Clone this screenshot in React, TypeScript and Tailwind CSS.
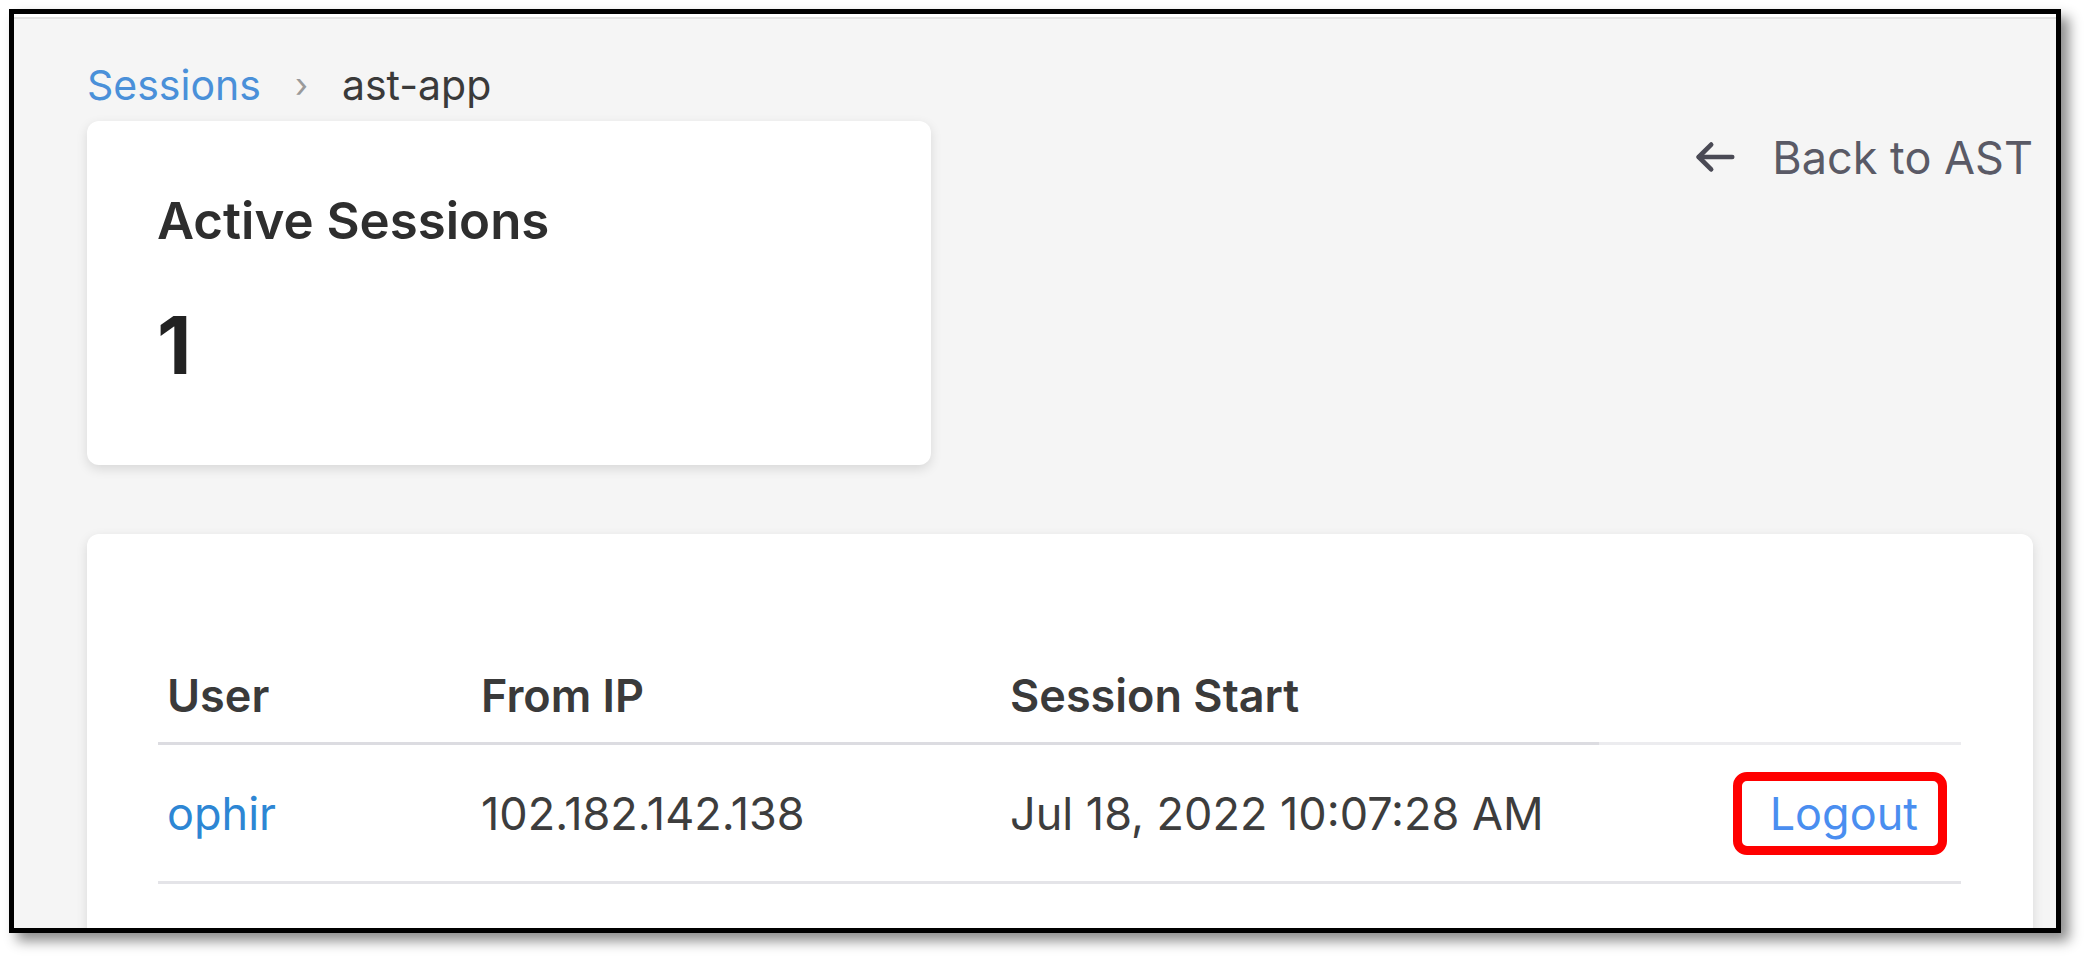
import React from "react";

export default function App() {
  return (
    <div
      className="w-[2089px] h-[962px] bg-white overflow-hidden pt-[9px] pl-[9px]"
      style={{ fontFamily: "Inter, 'Noto Sans', sans-serif" }}
    >
      <div className="w-[2052px] h-[924px] border-[5px] border-black bg-[#f5f5f5] overflow-hidden shadow-[8px_8px_12px_rgba(0,0,0,0.45)]">
        <div className="h-[3px] bg-white" />
        <div className="h-[2px] bg-[#e2e2e2]" />
        <div className="pl-[73px] pr-[23px]">
          {/* Breadcrumb */}
          <div className="mt-[42px] h-[48px] flex items-center text-[41px] leading-none">
            <span className="text-[#4a90d9]">Sessions</span>
            <span className="text-[#9a9a9a] mx-[34px] text-[34px]">›</span>
            <span className="text-[#3a3a3a]">ast-app</span>
          </div>

          {/* Top row */}
          <div className="mt-[12px] flex justify-between items-start">
            <div className="w-[844px] h-[344px] bg-white rounded-[12px] shadow-[0_4px_12px_rgba(0,0,0,0.12)] pl-[70px] pt-[69px]">
              <div className="h-[60px] flex items-center text-[51px] font-semibold text-[#2e2e2e] leading-none">
                Active Sessions
              </div>
              <div className="mt-[50px] h-[90px] flex items-center text-[80px] font-bold text-[#222] leading-none">
                1
              </div>
            </div>
            <div className="mt-[12px] h-[48px] flex items-center text-[#5a5a66] text-[45px] leading-none">
              <svg
                width="46"
                height="46"
                viewBox="0 0 24 24"
                fill="none"
                stroke="#4a4a55"
                strokeWidth="2.4"
                strokeLinecap="round"
                strokeLinejoin="round"
                className="mr-[34px]"
              >
                <path d="M21 12H3.5" />
                <path d="M10 5.5L3.5 12l6.5 6.5" />
              </svg>
              <span>Back to AST</span>
            </div>
          </div>

          {/* Table card */}
          <div className="mt-[69px] h-[500px] bg-white rounded-[12px] shadow-[0_4px_12px_rgba(0,0,0,0.12)] pl-[71px] pr-[72px] pt-[115px]">
            <div className="flex h-[96px] text-[45px] font-semibold text-[#3a3a3a] leading-none">
              <div className="w-[314px] pl-[9px] flex items-center border-b-[3px] border-[#dcdce1]">User</div>
              <div className="w-[529px] pl-[9px] flex items-center border-b-[3px] border-[#dcdce1]">From IP</div>
              <div className="w-[598px] pl-[9px] flex items-center border-b-[3px] border-[#dcdce1]">Session Start</div>
              <div className="flex-1 border-b-[3px] border-[#ececef]" />
            </div>
            <div className="flex h-[139px] text-[45px] text-[#3d3d3d] leading-none border-b-[3px] border-[#e4e4e8]">
              <div className="w-[314px] pl-[9px] flex items-center text-[#2d86d4]">ophir</div>
              <div className="w-[529px] pl-[9px] flex items-center">102.182.142.138</div>
              <div className="w-[598px] pl-[9px] flex items-center">Jul 18, 2022 10:07:28 AM</div>
              <div className="flex-1 flex items-center justify-end pr-[14px]">
                <span className="border-[9px] border-[#ff0000] rounded-[14px] pl-[28px] pr-[20px] h-[83px] flex items-center text-[#4a8ef0]">
                  Logout
                </span>
              </div>
            </div>
          </div>
        </div>
      </div>
    </div>
  );
}
